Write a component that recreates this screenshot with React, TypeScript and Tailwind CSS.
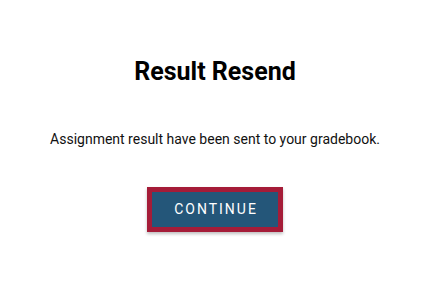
export default function App() {
  return (
    <div className="w-[433px] h-[285px] bg-white flex flex-col items-center pr-[3px]" style={{ fontFamily: "Roboto, sans-serif" }}>
      <h1 className="mt-[57px] text-[25px] leading-[30px] font-bold text-black">Result Resend</h1>
      <p className="mt-[42px] text-[14px] leading-[20px] text-[#111]">Assignment result have been sent to your gradebook.</p>
      <div className="mt-[38px] p-[5px] bg-[#a51c38] shadow-[0_2px_3px_rgba(0,0,0,0.25)]">
        <button className="w-[126px] h-[35px] bg-[#245679] text-white text-[14px] tracking-[2px] pl-[2px] font-normal flex items-center justify-center">CONTINUE</button>
      </div>
    </div>
  );
}
